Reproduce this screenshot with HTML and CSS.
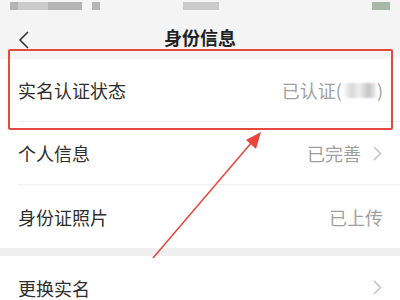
FILE: index.html
```html
<!DOCTYPE html>
<html lang="zh-CN">

<head>
  <meta charset="utf-8">
  <title>身份信息</title>
  <link rel="stylesheet" href="styles.css">
</head>

<body>
  <div id="screen">
    <div id="status">
      <span class="blot" style="width:8px"></span>
      <span class="blot light" style="width:30px"></span>
      <span class="blot" style="width:34px"></span>
      <span class="gap" style="width:10px"></span>
      <span class="blot" style="width:8px"></span>
      <span class="gap" style="width:83px"></span>
      <span class="blot light" style="width:36px"></span>
      <span class="gap" style="width:153px"></span>
      <span class="blot green" style="width:18px"></span>
    </div>
    <div id="nav">
      <svg class="back" viewBox="0 0 12 18" width="12" height="18">
        <path d="M10 1 L2 9 L10 17" fill="none" stroke="#333" stroke-width="1.6" />
      </svg>
      <h1 id="title">身份信息</h1>
    </div>
    <div class="group">
      <div class="row">
        <span class="label">实名认证状态</span>
        <span class="value">已认证(<span class="masked"></span>)</span>
      </div>
      <div class="row">
        <span class="label">个人信息</span>
        <span class="value">已完善<svg class="chev" viewBox="0 0 9 15" width="9" height="15"><path d="M1 1 L7.5 7.5 L1 14" fill="none" stroke="#bdbdbd" stroke-width="1.4" /></svg></span>
      </div>
      <div class="row">
        <span class="label">身份证照片</span>
        <span class="value">已上传</span>
      </div>
    </div>
    <div class="band"></div>
    <div class="group">
      <div class="row">
        <span class="label">更换实名</span>
        <span class="value"><svg class="chev" viewBox="0 0 9 15" width="9" height="15"><path d="M1 1 L7.5 7.5 L1 14" fill="none" stroke="#bdbdbd" stroke-width="1.4" /></svg></span>
      </div>
    </div>

    <!-- annotation drawn over the screenshot -->
    <div id="highlight"></div>
    <svg id="arrow" viewBox="0 0 400 300" width="400" height="300">
      <line x1="153" y1="258" x2="252" y2="142" stroke="#e8453c" stroke-width="1.5" />
      <polygon points="261,132 246,140 256,149" fill="#e8453c" />
    </svg>
  </div>
</body>

</html>
```

FILE: styles.css
```css
* {
  margin: 0;
  padding: 0;
  box-sizing: border-box
}

html,
body {
  width: 400px;
  height: 300px;
  overflow: hidden
}

body {
  font-family: "Noto Sans CJK SC", "Noto Sans", sans-serif;
  background: #fff;
  color: #333
}

#screen {
  position: relative;
  width: 400px;
  height: 300px;
  overflow: hidden
}

#status {
  height: 12px;
  padding: 2px 0 0 10px;
  display: flex;
  background: #f4f4f4
}

.blot {
  height: 8px;
  background: #b4b4b4;
  filter: blur(0.6px)
}

.blot.light {
  background: #cacaca
}

.blot.green {
  background: #a8b8a6
}

.gap {
  height: 8px
}

#nav {
  height: 47px;
  background: #f4f4f4;
  display: flex;
  align-items: center;
  justify-content: center;
  position: relative
}

.back {
  position: absolute;
  left: 18px;
  top: 19px
}

#title {
  font-size: 18px;
  font-weight: 700;
  color: #222;
  margin-top: 2px
}

.group {
  background: #fff
}

.row {
  height: 63px;
  margin-left: 18px;
  padding-right: 17px;
  display: flex;
  align-items: center;
  justify-content: space-between;
  border-bottom: 1px solid #efefef
}

.row:last-child {
  border-bottom: none
}

.label {
  font-size: 18px;
  color: #2e2e2e
}

.value {
  font-size: 18px;
  color: #a0a0a0;
  display: flex;
  align-items: center
}

.masked {
  display: inline-block;
  width: 33px;
  height: 15px;
  margin: 0 1px;
  background: linear-gradient(90deg, #fff 0, #d8d8d8 25%, #eee 50%, #c4c4c4 78%, #eee 100%);
  filter: blur(1.2px)
}

.chev {
  display: block;
  margin-left: 12px;
  margin-right: 1px
}

.band {
  height: 8px;
  background: #efefef
}

#highlight {
  position: absolute;
  left: 8px;
  top: 49px;
  width: 385px;
  height: 81px;
  border: 2px solid #e5483f;
  border-radius: 2px
}

#arrow {
  position: absolute;
  left: 0;
  top: 0
}
```
